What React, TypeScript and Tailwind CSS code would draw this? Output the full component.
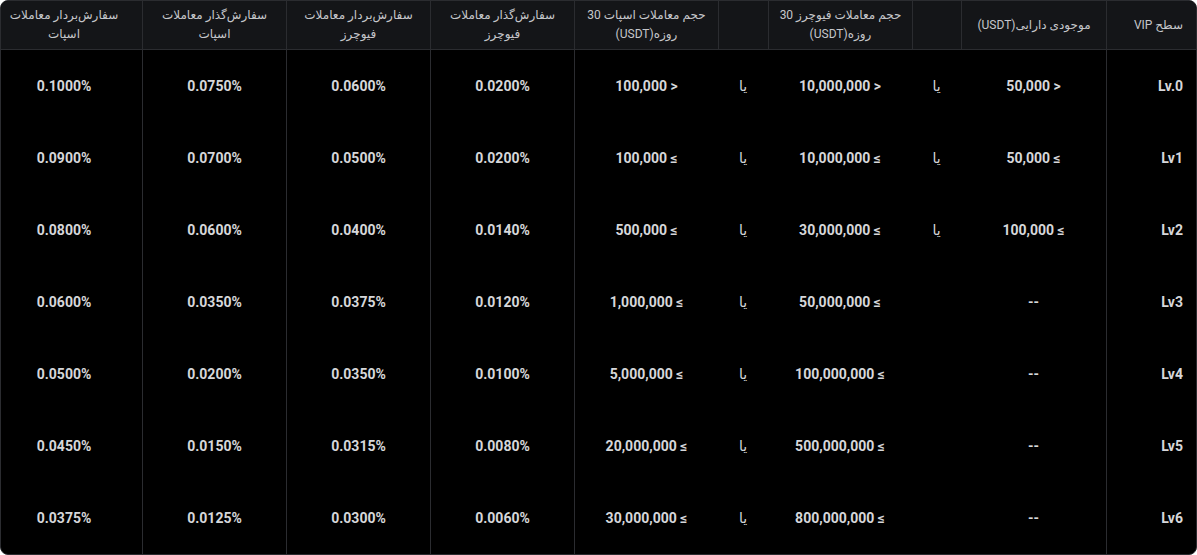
import React from "react"

type Row = {
  level: string
  asset: string
  futures: string
  spot: string
  fees: [string, string, string, string]
}

const rows: Row[] = [
  { level: "Lv.0", asset: "< 50,000", futures: "< 10,000,000", spot: "< 100,000", fees: ["0.0200%", "0.0600%", "0.0750%", "0.1000%"] },
  { level: "Lv1", asset: "≥ 50,000", futures: "≥ 10,000,000", spot: "≥ 100,000", fees: ["0.0200%", "0.0500%", "0.0700%", "0.0900%"] },
  { level: "Lv2", asset: "≥ 100,000", futures: "≥ 30,000,000", spot: "≥ 500,000", fees: ["0.0140%", "0.0400%", "0.0600%", "0.0800%"] },
  { level: "Lv3", asset: "--", futures: "≥ 50,000,000", spot: "≥ 1,000,000", fees: ["0.0120%", "0.0375%", "0.0350%", "0.0600%"] },
  { level: "Lv4", asset: "--", futures: "≥ 100,000,000", spot: "≥ 5,000,000", fees: ["0.0100%", "0.0350%", "0.0200%", "0.0500%"] },
  { level: "Lv5", asset: "--", futures: "≥ 500,000,000", spot: "≥ 20,000,000", fees: ["0.0080%", "0.0315%", "0.0150%", "0.0450%"] },
  { level: "Lv6", asset: "--", futures: "≥ 800,000,000", spot: "≥ 30,000,000", fees: ["0.0060%", "0.0300%", "0.0125%", "0.0375%"] },
]

const headers = [
  "سطح VIP",
  "موجودی دارایی(USDT)",
  "",
  "حجم معاملات فیوچرز 30 روزه(USDT)",
  "",
  "حجم معاملات اسپات 30 روزه(USDT)",
  "سفارش‌گذار معاملات فیوچرز",
  "سفارش‌بردار معاملات فیوچرز",
  "سفارش‌گذار معاملات اسپات",
  "سفارش‌بردار معاملات اسپات",
]

const cols = "grid grid-cols-[90px_145px_49px_144px_50px_144px_144px_144px_144px_1fr]"

export default function App() {
  return (
    <div
      dir="rtl"
      className="h-[555px] w-[1197px] overflow-hidden rounded-lg border border-[#2b2c30] bg-black"
      style={{ fontFamily: "Roboto, 'Noto Sans', 'DejaVu Sans', sans-serif" }}
    >
      {/* Header */}
      <div className={`${cols} h-[49px] border-b border-[#2b2c30] bg-[#141518] text-[12px] leading-[19px] text-[#c6c7cb]`}>
        {headers.map((h, i) => (
          <div
            key={i}
            className={`flex items-center border-[#2b2c30] ${
              i === 0
                ? "justify-start pr-[13px]"
                : i === headers.length - 1
                  ? "justify-center pr-[15px] text-center"
                  : "justify-center px-2 text-center"
            } ${i < headers.length - 1 ? "border-l" : ""}`}
          >
            {h}
          </div>
        ))}
      </div>

      {/* Body */}
      {rows.map((r) => (
        <div key={r.level} className={`${cols} h-[72px] text-sm font-bold text-[#d6d7da]`}>
          <div className="flex items-center border-l border-[#2b2c30] pr-[13px]">{r.level}</div>
          <div className="flex items-center justify-center">{r.asset}</div>
          <div className="flex items-center justify-center font-normal">{r.asset === "--" ? "" : "یا"}</div>
          <div className="flex items-center justify-center">{r.futures}</div>
          <div className="flex items-center justify-center font-normal">یا</div>
          <div className="flex items-center justify-center border-l border-[#2b2c30]">{r.spot}</div>
          {r.fees.map((f, i) => (
            <div
              key={i}
              className={`flex items-center justify-center ${i < 3 ? "border-l border-[#2b2c30]" : "pr-[15px]"}`}
            >
              {f}
            </div>
          ))}
        </div>
      ))}
    </div>
  )
}
